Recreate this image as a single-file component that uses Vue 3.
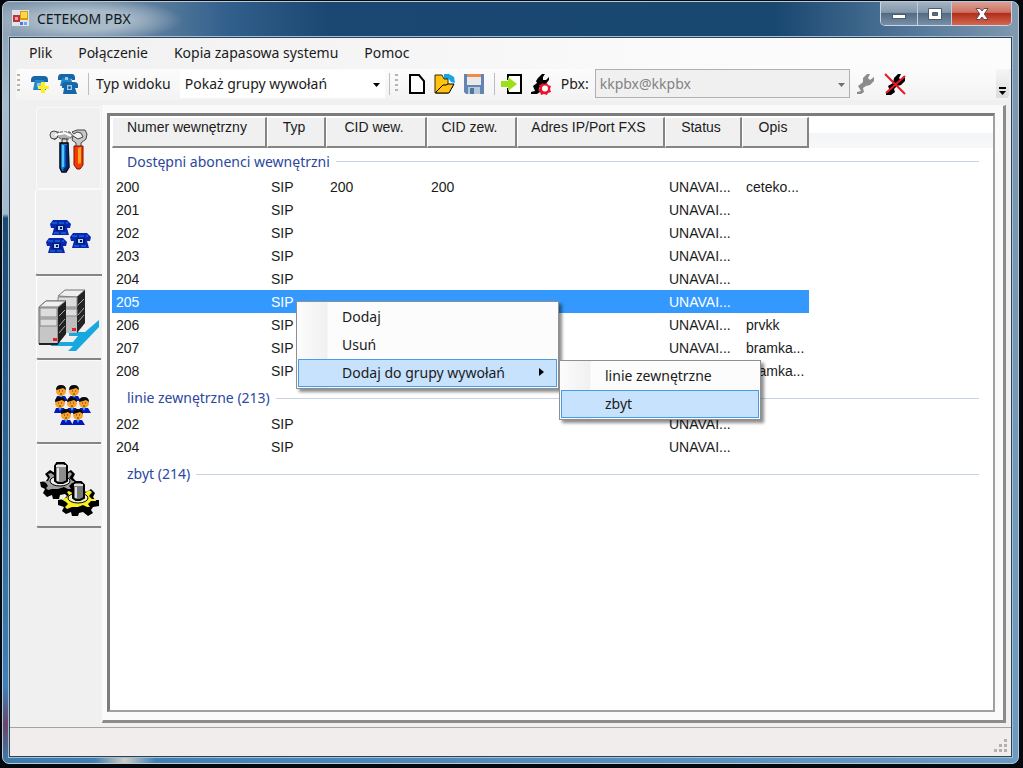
<script setup>
import { ref } from 'vue'

// Menu główne
const menu = ['Plik', 'Połączenie', 'Kopia zapasowa systemu', 'Pomoc']

// Kolumny listy abonentów
const kolumny = [
  { klucz: 'numer', nazwa: 'Numer wewnętrzny' },
  { klucz: 'typ', nazwa: 'Typ' },
  { klucz: 'cidWew', nazwa: 'CID wew.' },
  { klucz: 'cidZew', nazwa: 'CID zew.' },
  { klucz: 'adres', nazwa: 'Adres IP/Port FXS' },
  { klucz: 'status', nazwa: 'Status' },
  { klucz: 'opis', nazwa: 'Opis' }
]

const abonent = (numer, opis = '', cid = '') => ({
  numer,
  typ: 'SIP',
  cidWew: cid,
  cidZew: cid,
  adres: '',
  status: 'UNAVAI...',
  opis
})

const grupy = ref([
  {
    nazwa: 'Dostępni abonenci wewnętrzni',
    abonenci: [
      abonent('200', 'ceteko...', '200'),
      abonent('201'),
      abonent('202'),
      abonent('203'),
      abonent('204'),
      abonent('205'),
      abonent('206', 'prvkk'),
      abonent('207', 'bramka...'),
      abonent('208', 'bramka...')
    ]
  },
  {
    nazwa: 'linie zewnętrzne (213)',
    abonenci: [abonent('202'), abonent('204')]
  },
  {
    nazwa: 'zbyt (214)',
    abonenci: []
  }
])

const widok = ref('grupy')
const serwer = ref('kkpbx')
const zaznaczony = ref('0-205')
const zakladka = ref('abonenci')
</script>

<template>
  <div class="pulpit">
    <div class="okno">
      <header class="tytul">
        <svg class="ikona-okna" width="18" height="18" viewBox="0 0 18 18">
          <rect x="0" y="1" width="17" height="16" fill="#dfe4ea" />
          <rect x="1" y="6" width="7" height="7" fill="#c03038" />
          <rect x="3" y="8" width="3" height="3" fill="#f0a8a0" />
          <rect x="8" y="2" width="8" height="9" fill="#d99a10" />
          <rect x="9" y="3" width="6" height="6" fill="#ffd84a" />
          <rect x="8" y="13" width="3" height="3" fill="#4a78d8" />
          <rect x="12" y="13" width="3" height="3" fill="#7aa0ee" />
        </svg>
        <h1>CETEKOM PBX</h1>
        <div class="przyciski-okna">
          <button type="button" class="minimalizuj" aria-label="Minimalizuj">
            <svg width="16" height="12" viewBox="0 0 16 12">
              <rect x="1.5" y="6.5" width="13" height="4" fill="#fff" stroke="#4e5b6c" />
            </svg>
          </button>
          <button type="button" class="maksymalizuj" aria-label="Maksymalizuj">
            <svg width="16" height="14" viewBox="0 0 16 14">
              <path d="M1.5 1.5h13v11h-13zM5.5 5.5v3h5v-3z" fill="#fff" fill-rule="evenodd" stroke="#4e5b6c" />
            </svg>
          </button>
          <button type="button" class="zamknij" aria-label="Zamknij">
            <svg width="16" height="14" viewBox="0 0 16 14">
              <path d="M2 1.500h4l2 2.500 2-2.500h4L10.300 7l3.700 5.500h-4L8 10l-2 2.500H2L5.700 7z" fill="#fff" stroke="#6b4450" />
            </svg>
          </button>
        </div>
      </header>

      <main class="klient">
        <nav class="menu">
          <button v-for="pozycja in menu" :key="pozycja" type="button">{{ pozycja }}</button>
        </nav>

        <div class="pasek">
          <span class="uchwyt"></span>
          <button type="button" class="narzedzie dodaj-telefon" aria-label="Dodaj abonenta">
            <svg width="22" height="22" viewBox="0 0 22 22">
              <path d="M2 7q0-4 4-4h9q4 0 4 4v2h-4V8H6v1H2z" fill="#1767a8" />
              <path d="M6 7h9l2 10H4z" fill="#2388cc" />
              <path d="M8 10h5v4H8z" fill="#8fc4e4" />
              <path d="M12 9h4v4h4v3h-4v4h-4v-4H9v-3h3z" fill="#ffee20" />
            </svg>
          </button>
          <button type="button" class="narzedzie telefony" aria-label="Dodaj wielu abonentów">
            <svg width="22" height="22" viewBox="0 0 22 22">
              <path d="M1 5q0-4 3-4h11q3 0 3 4v2h-3V6H5v1H1z" fill="#1767a8" />
              <path d="M5 5h9l2 8H3z" fill="#2583c5" />
              <path d="M5 12q0-3 3-3h9q4 0 4 3v3h-3l2 6H6l1-6H5z" fill="#1767a8" />
              <path d="M8 4h3v3H8zm2 8h5v5h-5z" fill="#9bc9e6" />
              <circle cx="12.500" cy="14.500" r="1.500" fill="#1767a8" />
            </svg>
          </button>
          <span class="kreska"></span>
          <label for="widok">Typ widoku</label>
          <span class="lista lista-widok">
            <select id="widok" v-model="widok">
              <option value="grupy">Pokaż grupy wywołań</option>
            </select>
            <svg width="7" height="4" viewBox="0 0 7 4"><path d="M0 0h7L3.500 4z" fill="#000" /></svg>
          </span>
          <span class="kreska druga"></span>
          <span class="uchwyt"></span>
          <button type="button" class="narzedzie nowy" aria-label="Nowy">
            <svg width="20" height="22" viewBox="0 0 20 22">
              <path d="M3 2h9l5 6v12H3z" fill="#fff" stroke="#000" stroke-width="2" />
            </svg>
          </button>
          <button type="button" class="narzedzie otworz" aria-label="Otwórz">
            <svg width="24" height="22" viewBox="0 0 24 22">
              <path d="M11 1h5l5 3 1 6-4-1-2-3h-5z" fill="#12a8e6" />
              <path d="M2 20V2h7l2 4h4v6l5 1-5 7z" fill="#ffc20e" stroke="#3a2b00" />
              <path d="M3 19l7-7h3l2-1h6l-5 9H3z" fill="#ffc20e" stroke="#000" />
            </svg>
          </button>
          <button type="button" class="narzedzie zapisz" aria-label="Zapisz">
            <svg width="22" height="22" viewBox="0 0 22 22">
              <path d="M1 1h20v20H3l-2-2z" fill="#6285b4" />
              <path d="M4 1h14v11H4z" fill="#e9e9ea" />
              <path d="M4 1h14v3H4z" fill="#f08a48" />
              <path d="M5 14h12v7H5z" fill="#b8c8da" />
              <path d="M7 15h4v6H7z" fill="#50779c" />
            </svg>
          </button>
          <span class="kreska trzecia"></span>
          <button type="button" class="narzedzie polacz" aria-label="Połącz">
            <svg width="22" height="22" viewBox="0 0 22 22">
              <path d="M7 7V2h13v18H7v-5" fill="#fff" stroke="#000" stroke-width="2" />
              <path d="M0 8h7V4l9 7-9 7v-4H0z" fill="#9be018" />
            </svg>
          </button>
          <button type="button" class="narzedzie konfiguruj" aria-label="Konfiguruj">
            <svg width="22" height="22" viewBox="0 0 22 22">
              <path d="M8 5l4-4h3l-2 3v3h3l3-3v3l-4 5-4 1-2 2 1 4-3 2H1v-2l4-1-2-5 4-3-1-2z" fill="#000" />
              <path d="M12 10l2 1 3-1 1 2 3 1-1 3 1 3-3 1-1 2-3-1-3 1-1-3-2-2 2-2-1-3 3-1z" fill="#e81430" />
              <circle cx="15" cy="15.500" r="3" fill="#fff" />
            </svg>
          </button>
          <label for="serwer">Pbx:</label>
          <span class="lista lista-serwer">
            <select id="serwer" v-model="serwer" disabled>
              <option value="kkpbx">kkpbx@kkpbx</option>
            </select>
            <svg width="7" height="4" viewBox="0 0 7 4"><path d="M0 0h7L3.500 4z" fill="#707070" /></svg>
          </span>
          <button type="button" class="narzedzie klucz" aria-label="Połącz z centralą" disabled>
            <svg width="20" height="22" viewBox="0 0 20 22">
              <path d="M8 5l4-4h3l-2 4 2 2 4-3v4l-4 4-4 1-3 2 1 4-3 2H2v-2l4-1-3-5 4-3 1-1z" fill="#8c8c8c" />
            </svg>
          </button>
          <button type="button" class="narzedzie rozlacz" aria-label="Rozłącz">
            <svg width="22" height="22" viewBox="0 0 22 22">
              <path d="M10 5l4-4h3l-2 4 2 2 4-3v4l-4 4-4 1-3 3 1 3-4 3H2v-3l4-1-2-5 5-3z" fill="#000" />
              <path d="M1 1l20 20M21 3L2 20" fill="none" stroke="#ee1620" stroke-width="2" />
            </svg>
          </button>
          <button type="button" class="wiecej" aria-label="Więcej">
            <svg width="7" height="9" viewBox="0 0 7 9"><path d="M0 0h7v2H0zM0 4h7L3.500 8z" fill="#000" /></svg>
          </button>
        </div>

        <div class="tresc">
          <aside class="zakladki">
            <button type="button" class="zakladka narzedzia" aria-label="Narzędzia" @click="zakladka = 'narzedzia'">
              <svg width="40" height="46" viewBox="0 0 40 46">
                <path d="M7 4h14l3 4-4 3h-8l-3-2-3 3-4-3 1-4z" fill="#b0b0b0" stroke="#555" stroke-dasharray="3 1" />
                <circle cx="5" cy="7" r="4" fill="#ddd" stroke="#444" />
                <path d="M6 7l10-2 6 3" fill="none" stroke="#fff" stroke-width="2" />
                <path d="M23 4l5-2h8l2 4-1 5-5 4v4h-5v-4l-4-3 1-4 5 3 5-2-2-4-4-1-3 2z" fill="#c8c8c8" stroke="#444" />
                <path d="M13 11h5v5h-5z" fill="#ddd" stroke="#333" />
                <path d="M11 15h8l1 24-3 5h-4l-2-4z" fill="#1478d8" stroke="#000" stroke-width="1.500" />
                <path d="M14 17v22" stroke="#52c6ff" stroke-width="2" />
                <path d="M18 17v22l-3 4" fill="none" stroke="#04276b" stroke-width="3" />
                <path d="M25 18h9v19l-3 4h-3l-3-4z" fill="#f23a08" stroke="#801000" />
                <path d="M29 20l3-1v16l-3 1z" fill="#ffa51f" />
              </svg>
            </button>
            <button type="button" class="zakladka" :class="{ aktywna: zakladka === 'abonenci' }" aria-label="Abonenci" @click="zakladka = 'abonenci'">
              <svg width="46" height="36" viewBox="0 0 46 36">
                <g v-for="(p, i) in [[4, 1], [0, 19], [24, 14]]" :key="i" :transform="`translate(${p[0]} ${p[1]})`">
                  <path d="M0 4l3-4h14l4 4-1 4h-3l2 7H2l2-7H1z" fill="#0826b0" />
                  <path d="M2 3h16M4 13h13" stroke="#1686ed" stroke-dasharray="5 2" />
                  <rect x="6" y="5" width="9" height="6" fill="#061b70" />
                  <rect x="8" y="6" width="5" height="4" fill="#a7d8ff" />
                  <rect x="10" y="7" width="2" height="2" fill="#001166" />
                </g>
              </svg>
            </button>
            <button type="button" class="zakladka" aria-label="Serwery" @click="zakladka = 'serwery'">
              <svg width="62" height="64" viewBox="0 0 62 64">
                <path d="M61 31v7L38 62h-8l5-5H13v-4h22l5-6h-9v-4h16z" fill="#18a8e0" />
                <path d="M20 7l7-6h20l-8 7v36H20z" fill="#bdbdbd" />
                <path d="M20 7l7-6h20l-8 7z" fill="#efefef" stroke="#777" />
                <path d="M39 8l8-7v33l-8 10z" fill="#242424" />
                <path d="M20 8h19v10H20zM20 20h19v7H20z" fill="#ddd" stroke="#888" />
                <path d="M40 16l6-6M40 26l6-7M40 33l6-7" stroke="#aaa" />
                <path d="M1 18l7-6h20l-8 7v36H1z" fill="#c6c6c6" stroke="#666" />
                <path d="M1 18l7-6h20l-8 6z" fill="#f0f0f0" stroke="#777" />
                <path d="M20 19l8-7v33l-8 10z" fill="#202020" />
                <path d="M2 19h17v9H2zM2 30h17v7H2z" fill="#ddd" stroke="#888" />
                <path d="M21 27l6-6M21 37l6-7M21 44l6-7" stroke="#aaa" />
                <path d="M1 55h19" stroke="#222" stroke-width="2" />
                <path d="M15 49h4v3h-4zM34 39h4v3h-4z" fill="#e51b30" />
              </svg>
            </button>
            <button type="button" class="zakladka grupa-osob" aria-label="Grupy" @click="zakladka = 'grupy'">
              <svg width="38" height="42" viewBox="0 0 38 42">
                <g v-for="(p, i) in [[1, 1], [14, 1], [0, 13], [24, 13], [12, 13], [6, 25], [18, 25]]" :key="i" :transform="`translate(${p[0]} ${p[1]})`">
                  <path d="M0 16l2-5h8l3 5z" fill="#0716bd" />
                  <path d="M4 10h4l-2 4z" fill="#20b0ff" />
                  <circle cx="6" cy="6" r="5" fill="#f6a22c" />
                  <path d="M1 5q0-5 5-5t5 5L8 3 5 4z" fill="#090909" />
                  <path d="M4 6h1M7 6h1M5 9h2" stroke="#773300" />
                </g>
              </svg>
            </button>
            <button type="button" class="zakladka" aria-label="Ustawienia" @click="zakladka = 'ustawienia'">
              <svg width="62" height="54" viewBox="0 0 62 54">
                <path d="M2 20l6-1 2-3-3-4 5-4 5 3 4-2h4l3 2 5-3 4 4-2 4 3 3h4v6l-6 1-2 3 2 4-4 3-5-4-5 1-1 4h-6l-1-4-5 2-4-4 2-4-4-2z" fill="#000" />
                <path d="M4 19h6l2-4-2-3 3-1 4 3 5-2 5 2 5-4 2 2-3 4 4 3h4v2h-5l-3 3 2 3h-3l-4-2-6 2h-6l-4 1-2-2 2-2-2-3z" fill="#a0a0a0" />
                <ellipse cx="22" cy="19" rx="10" ry="5" fill="#eee" stroke="#000" />
                <path d="M17 4l2-3h7l3 3v15l-4 2h-5l-3-2z" fill="#8c8c8c" stroke="#000" stroke-width="2" />
                <path d="M18 4h10M20 6v13" stroke="#e7e7e7" stroke-width="2" />
                <path d="M20 38l6-1 3-3-3-4 5-3 5 3 5-2h4l3 2 5-3 4 4-2 4 2 3h4v6l-6 1-2 3 2 3-5 3-5-4-4 1-1 3h-6l-1-4-5 2-4-3 2-4-6-2z" fill="#000" />
                <path d="M23 37l5-1 3-3-2-3 2-1 5 3 5-2 5 2 5-4 3 2-3 4 3 3h4v2h-5l-3 3 2 3h-3l-4-2-5 2h-6l-5 2-2-2 3-3-2-2z" fill="#faf020" />
                <ellipse cx="40" cy="36" rx="10" ry="5" fill="#f3f3d0" stroke="#000" />
                <path d="M35 23l2-3h6l3 3v13l-4 2h-4l-3-2z" fill="#777" stroke="#000" stroke-width="2" />
                <path d="M36 23h9M38 25v11" stroke="#ddd" stroke-width="2" />
              </svg>
            </button>
          </aside>

          <section class="panel">
            <div class="ramka">
              <table>
                <colgroup>
                  <col v-for="k in kolumny" :key="k.klucz" :class="`kol-${k.klucz}`" />
                  <col />
                </colgroup>
                <thead>
                  <tr>
                    <th v-for="k in kolumny" :key="k.klucz" scope="col">{{ k.nazwa }}</th>
                    <td class="reszta"></td>
                  </tr>
                </thead>
                <tbody v-for="(grupa, g) in grupy" :key="grupa.nazwa">
                  <tr class="grupa">
                    <th colspan="8" scope="rowgroup">
                      <div class="nazwa-grupy">{{ grupa.nazwa }}</div>
                    </th>
                  </tr>
                  <tr
                    v-for="a in grupa.abonenci"
                    :key="a.numer"
                    :class="{ zaznaczony: zaznaczony === `${g}-${a.numer}` }"
                    @click="zaznaczony = `${g}-${a.numer}`"
                  >
                    <td v-for="k in kolumny" :key="k.klucz">{{ a[k.klucz] }}</td>
                    <td class="pusta"></td>
                  </tr>
                </tbody>
              </table>
            </div>
          </section>
        </div>

        <footer class="stan">
          <svg width="14" height="14" viewBox="0 0 14 14">
            <path d="M11 1h3v3h-3zM6 6h3v3H6zM11 6h3v3h-3zM1 11h3v3H1zM6 11h3v3H6zM11 11h3v3h-3z" fill="#b4b0b0" />
          </svg>
        </footer>
      </main>
    </div>

    <div class="kontekst menu-abonenta">
      <button type="button">Dodaj</button>
      <button type="button">Usuń</button>
      <button type="button" class="wybrana">
        Dodaj do grupy wywołań
        <svg width="5" height="8" viewBox="0 0 5 8"><path d="M0 0l5 4-5 4z" fill="#000" /></svg>
      </button>
    </div>
    <div class="kontekst menu-grup">
      <button type="button">linie zewnętrzne</button>
      <button type="button" class="wybrana">zbyt</button>
    </div>
  </div>
</template>

<style>
body {
  background: #05080c;
}
</style>

<style scoped>
* {
  box-sizing: border-box;
}

.pulpit {
  position: relative;
  display: flex;
  min-height: 100vh;
  padding: 1px 4px 4px 2px;
  background: #05080c;
  font-family: "Noto Sans", "Open Sans", sans-serif;
  font-size: 14px;
  color: #1b1b1b;
}

button,
select {
  font: inherit;
  color: inherit;
  margin: 0;
  padding: 0;
  border: none;
  background: none;
}

svg {
  display: block;
}

/* Okno */
.okno {
  flex: 1;
  display: flex;
  flex-direction: column;
  min-width: 0;
  padding: 0 6px 6px;
  border: 1px solid #b4cbdc;
  border-radius: 7px;
  background:
    radial-gradient(ellipse 100px 22px at 80px 18px, #a9bac9 0, #a9bac9 45%, transparent) top left / 200px 36px no-repeat,
    linear-gradient(#8398ac 0, #a9bccb 100px, #a4b9ca 212px, #1c4970 216px, #285c8c 50%, #3f80b6 90%, #6a4668 95%, #3f7cab) left / 8px 100% no-repeat,
    linear-gradient(#8199ae 0, #7896af 200px, #6b9ac2) right / 8px 100% no-repeat,
    linear-gradient(90deg, #8499ad 0, #60809e 14%, #32608c 22%, #1a4872 32%, #184770 76%, #55789b 90%, #7e98ae) top / 100% 40px no-repeat,
    linear-gradient(90deg, #407bab, #437eae 9%, #d0cbc4 12%, #4380b2 15%, #6b9bc4) bottom / 100% 9px no-repeat,
    #3d74a4;
}

.tytul {
  display: flex;
  align-items: center;
  height: 35px;
  padding: 0 0 3px 3px;
}

.tytul h1 {
  margin: 0 0 0 7px;
  font-size: 14px;
  font-weight: normal;
  color: #101820;
}

.przyciski-okna {
  display: flex;
  align-self: flex-start;
  height: 24px;
  margin: 0 0 0 auto;
  border: 1px solid #cbd6e0;
  border-top: none;
  border-radius: 0 0 5px 5px;
  overflow: hidden;
}

.przyciski-okna button {
  display: flex;
  align-items: center;
  justify-content: center;
  background: linear-gradient(#a5b3c2, #8398ad 45%, #536b84 50%, #7790a7);
  border-right: 1px solid #c3ced9;
}

.przyciski-okna .minimalizuj {
  width: 37px;
}

.przyciski-okna .maksymalizuj {
  width: 34px;
}

.przyciski-okna .zamknij {
  width: 59px;
  border-right: none;
  background: linear-gradient(#dba096, #ce7162 45%, #b12f1b 50%, #d46650);
}

.klient {
  flex: 1;
  display: flex;
  flex-direction: column;
  min-height: 0;
  border: 1px solid #2a4359;
  outline: 1px solid #a6bfd1;
  background: #f0f0f0;
}

/* Menu i pasek narzędzi */
.menu {
  display: flex;
  gap: 26px;
  height: 31px;
  padding: 0 0 2px 19px;
  background: linear-gradient(90deg, #f0f0f0, #fcfcfc 80%);
}

.pasek {
  display: flex;
  align-items: center;
  height: 31px;
  margin: 0 2px 0 6px;
  padding-bottom: 2px;
  border-radius: 3px;
  background: linear-gradient(#fcfcfc, #f3f3f3);
}

.uchwyt {
  width: 3px;
  height: 19px;
  margin-left: 1px;
  background: repeating-linear-gradient(#b4b4b4 0 2px, transparent 2px 5px);
}

.kreska {
  width: 1px;
  height: 22px;
  margin: 0 7px 0 9px;
  background: #bdbdbd;
}

.kreska.druga {
  margin: 0 4px;
}

.kreska.trzecia {
  margin: 0 6px 0 9px;
}

.narzedzie {
  flex: none;
}

.dodaj-telefon {
  margin-left: 9px;
}

.telefony {
  margin-left: 6px;
}

.nowy {
  margin-left: 9px;
}

.otworz,
.zapisz {
  margin-left: 6px;
}

.konfiguruj {
  margin-left: 7px;
}

.konfiguruj + label {
  margin-left: 9px;
}

.lista {
  position: relative;
  display: block;
  margin-left: 6px;
}

.lista select {
  display: block;
  width: 100%;
  appearance: none;
}

.lista svg {
  position: absolute;
  right: 5px;
  top: 50%;
  margin-top: -1px;
  pointer-events: none;
}

.lista-widok {
  width: 205px;
  margin-left: 9px;
}

.lista-widok select {
  height: 28px;
  padding-left: 5px;
  background: #fff;
}

.lista-serwer {
  width: 255px;
}

.lista-serwer select {
  height: 29px;
  padding-left: 4px;
  border: 1px solid #b0b0b0;
  background: #f0f0f0;
  color: #838383;
  opacity: 1;
}

.klucz {
  margin-left: 5px;
}

.rozlacz {
  margin-left: 9px;
}

.wiecej {
  display: flex;
  align-items: flex-end;
  justify-content: center;
  align-self: stretch;
  width: 13px;
  margin-left: auto;
  padding-bottom: 2px;
  border-radius: 0 3px 3px 0;
  background: linear-gradient(#f6f6f6, #dcdcdc);
}

/* Zakładki */
.tresc {
  flex: 1;
  display: flex;
  min-height: 0;
  padding: 5px 5px 4px 0;
}

.zakladki {
  display: flex;
  flex-direction: column;
  flex: none;
  width: 92px;
  padding: 2px 1px 0 26px;
}

.zakladka {
  display: flex;
  align-items: center;
  justify-content: center;
  height: 84px;
  padding-top: 6px;
  border-left: 1px solid #fff;
  border-top: 1px solid #fafafa;
  border-bottom: 2px solid #848484;
  border-radius: 3px 0 0 3px;
}

.zakladka.narzedzia {
  height: 82px;
  border: 1px solid #fafafa;
}

.zakladka.aktywna {
  height: 87px;
  margin: 0 -1px;
  padding-top: 10px;
}

.zakladka.grupa-osob {
  padding-left: 8px;
}

/* Lista abonentów */
.panel {
  flex: 1;
  display: flex;
  min-width: 0;
  padding: 7px 8px 8px 4px;
  border: 1px solid #fafafa;
  border-right: 3px solid #8b8b8b;
  border-bottom: 3px solid #8b8b8b;
  background: #fafafa;
}

.ramka {
  flex: 1;
  min-width: 0;
  border: 2px solid #a0a0a0;
  border-top: 3px solid #7c7c7c;
  border-left: 3px solid #7c7c7c;
  padding: 1px 0 0 2px;
  background: #fff;
}

table {
  width: 100%;
  table-layout: fixed;
  border-collapse: separate;
  border-spacing: 0;
  font-family: "Liberation Sans", Arial, sans-serif;
}

.kol-numer {
  width: 155px;
}

.kol-typ {
  width: 59px;
}

.kol-cidWew {
  width: 101px;
}

.kol-cidZew {
  width: 90px;
}

.kol-adres {
  width: 148px;
}

.kol-status {
  width: 77px;
}

.kol-opis {
  width: 67px;
}

thead th {
  height: 31px;
  padding: 0 4px 10px 0;
  font-weight: normal;
  line-height: 16px;
  white-space: nowrap;
  background: #f0f0f0;
  border-left: 1px solid #fff;
  border-top: 1px solid #fff;
  border-right: 2px solid #858585;
  border-bottom: 2px solid #858585;
}

.reszta {
  background: linear-gradient(#fff 50%, #f4f5f7 50%, #f7f8f9);
}

tbody td {
  height: 23px;
  padding: 0 0 0 4px;
  line-height: 16px;
  white-space: nowrap;
}

.zaznaczony td {
  background: #3399ff;
  color: #fff;
}

.zaznaczony .pusta {
  background: none;
}

.grupa th {
  height: 30px;
  padding: 2px 14px 0 15px;
  font-family: "Noto Sans", "Open Sans", sans-serif;
  font-weight: normal;
  text-align: left;
  color: #2b479e;
}

thead + tbody .grupa th {
  height: 27px;
  padding-top: 0;
}

.nazwa-grupy {
  display: flex;
  align-items: center;
  gap: 6px;
  line-height: 20px;
}

.nazwa-grupy::after {
  content: "";
  flex: 1;
  height: 1px;
  background: #c9d3e6;
}

/* Pasek stanu */
.stan {
  display: flex;
  justify-content: flex-end;
  align-items: flex-end;
  height: 29px;
  padding: 0 4px 4px 0;
  border-top: 1px solid #a3a3a3;
  background: #f1edec;
}

/* Menu kontekstowe */
.kontekst {
  position: absolute;
  display: flex;
  flex-direction: column;
  padding: 1px;
  border: 1px solid #8f8f8f;
  background: linear-gradient(90deg, #fcfcfc, #f0f0f0 30px, #fcfcfc 31px);
  box-shadow: 3px 3px 3px rgba(0, 0, 0, 0.45);
}

.kontekst button {
  display: flex;
  align-items: center;
  justify-content: space-between;
  height: 28px;
  padding: 0 12px 2px 43px;
  border: 1px solid transparent;
}

.kontekst .wybrana {
  background: #c7e2fd;
  border-color: #4a9ae6;
}

.menu-abonenta {
  left: 296px;
  top: 301px;
  width: 263px;
}

.menu-grup {
  left: 559px;
  top: 360px;
  width: 202px;
}
</style>
